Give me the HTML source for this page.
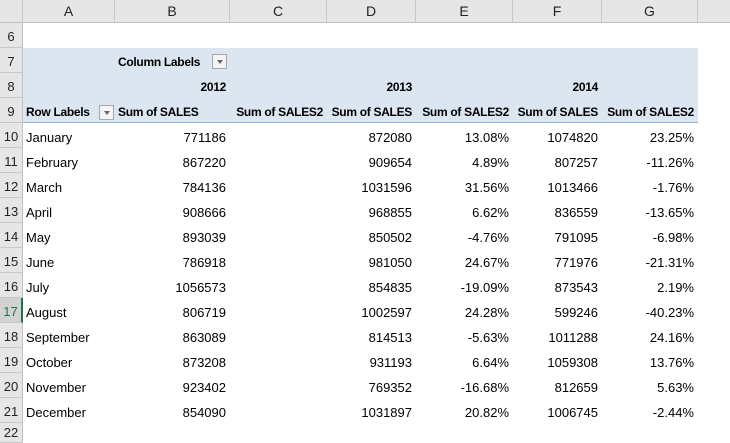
<!DOCTYPE html>
<html><head><meta charset="utf-8"><style>
body{margin:0;width:730px;height:443px;overflow:hidden;background:#fff;font-family:"Liberation Sans",sans-serif;font-size:13px;color:#000;position:relative}
div{position:absolute;box-sizing:border-box}
.ch{top:0;height:23px;background:#e6e6e6;border-right:1px solid #c8c8c8;border-bottom:1px solid #c0c0c0;text-align:center;line-height:23px;color:#222;font-size:14px}
.rh{left:0;width:23px;height:25px;background:#e6e6e6;border-bottom:1px solid #c8c8c8;border-right:1px solid #c0c0c0;text-align:center;line-height:27px;color:#222}
.c{height:25px;line-height:29px;white-space:nowrap;overflow:visible}
.r{text-align:right;padding-right:4px}
.l{padding-left:3px}
.b{font-weight:bold;font-size:12px;letter-spacing:-0.3px}
.dd{width:15px;height:15px;border:1px solid #a8a8a8;background:#f4f4f4}
.dd:after{content:"";position:absolute;left:4px;top:5px;border-left:3px solid transparent;border-right:3px solid transparent;border-top:4px solid #666}
</style></head><body>
<div class="ch" style="left:0;width:23px;background:#e6e6e6"></div>
<div class="ch" style="left:23px;width:92px">A</div>
<div class="ch" style="left:115px;width:115px">B</div>
<div class="ch" style="left:230px;width:97px">C</div>
<div class="ch" style="left:327px;width:89px">D</div>
<div class="ch" style="left:416px;width:97px">E</div>
<div class="ch" style="left:513px;width:89px">F</div>
<div class="ch" style="left:602px;width:96px">G</div>
<div class="ch" style="left:698px;width:32px;border-right:none"></div>

<div style="left:23px;top:48px;width:675px;height:75px;background:#dce6f1;border-bottom:1px solid #95b3d7"></div>

<div class="rh" style="top:23px">6</div>
<div class="rh" style="top:48px">7</div>
<div class="rh" style="top:73px">8</div>
<div class="rh" style="top:98px">9</div>
<div class="rh" style="top:123px">10</div>
<div class="rh" style="top:148px">11</div>
<div class="rh" style="top:173px">12</div>
<div class="rh" style="top:198px">13</div>
<div class="rh" style="top:223px">14</div>
<div class="rh" style="top:248px">15</div>
<div class="rh" style="top:273px">16</div>
<div class="rh" style="top:298px;background:#d2d2d2;color:#217346;border-right:2px solid #217346">17</div>
<div class="rh" style="top:323px">18</div>
<div class="rh" style="top:348px">19</div>
<div class="rh" style="top:373px">20</div>
<div class="rh" style="top:398px">21</div>
<div class="rh" style="top:423px;height:20px;line-height:20px">22</div>

<div class="c b" style="left:118px;top:48px">Column Labels</div>
<div class="dd" style="left:212px;top:54px"></div>
<div class="c b r" style="left:115px;top:73px;width:115px">2012</div>
<div class="c b r" style="left:327px;top:73px;width:89px">2013</div>
<div class="c b r" style="left:513px;top:73px;width:89px">2014</div>
<div class="c b l" style="left:23px;top:98px">Row Labels</div>
<div class="dd" style="left:99px;top:105px"></div>
<div class="c b l" style="left:115px;top:98px">Sum of SALES</div>
<div class="c b r" style="left:230px;top:98px;width:97px">Sum of SALES2</div>
<div class="c b r" style="left:327px;top:98px;width:89px">Sum of SALES</div>
<div class="c b r" style="left:416px;top:98px;width:97px">Sum of SALES2</div>
<div class="c b r" style="left:513px;top:98px;width:89px">Sum of SALES</div>
<div class="c b r" style="left:602px;top:98px;width:96px">Sum of SALES2</div>

<div class="c l" style="left:23px;top:123px">January</div><div class="c r" style="left:115px;top:123px;width:115px">771186</div><div class="c r" style="left:327px;top:123px;width:89px">872080</div><div class="c r" style="left:416px;top:123px;width:97px">13.08%</div><div class="c r" style="left:513px;top:123px;width:89px">1074820</div><div class="c r" style="left:602px;top:123px;width:96px">23.25%</div>
<div class="c l" style="left:23px;top:148px">February</div><div class="c r" style="left:115px;top:148px;width:115px">867220</div><div class="c r" style="left:327px;top:148px;width:89px">909654</div><div class="c r" style="left:416px;top:148px;width:97px">4.89%</div><div class="c r" style="left:513px;top:148px;width:89px">807257</div><div class="c r" style="left:602px;top:148px;width:96px">-11.26%</div>
<div class="c l" style="left:23px;top:173px">March</div><div class="c r" style="left:115px;top:173px;width:115px">784136</div><div class="c r" style="left:327px;top:173px;width:89px">1031596</div><div class="c r" style="left:416px;top:173px;width:97px">31.56%</div><div class="c r" style="left:513px;top:173px;width:89px">1013466</div><div class="c r" style="left:602px;top:173px;width:96px">-1.76%</div>
<div class="c l" style="left:23px;top:198px">April</div><div class="c r" style="left:115px;top:198px;width:115px">908666</div><div class="c r" style="left:327px;top:198px;width:89px">968855</div><div class="c r" style="left:416px;top:198px;width:97px">6.62%</div><div class="c r" style="left:513px;top:198px;width:89px">836559</div><div class="c r" style="left:602px;top:198px;width:96px">-13.65%</div>
<div class="c l" style="left:23px;top:223px">May</div><div class="c r" style="left:115px;top:223px;width:115px">893039</div><div class="c r" style="left:327px;top:223px;width:89px">850502</div><div class="c r" style="left:416px;top:223px;width:97px">-4.76%</div><div class="c r" style="left:513px;top:223px;width:89px">791095</div><div class="c r" style="left:602px;top:223px;width:96px">-6.98%</div>
<div class="c l" style="left:23px;top:248px">June</div><div class="c r" style="left:115px;top:248px;width:115px">786918</div><div class="c r" style="left:327px;top:248px;width:89px">981050</div><div class="c r" style="left:416px;top:248px;width:97px">24.67%</div><div class="c r" style="left:513px;top:248px;width:89px">771976</div><div class="c r" style="left:602px;top:248px;width:96px">-21.31%</div>
<div class="c l" style="left:23px;top:273px">July</div><div class="c r" style="left:115px;top:273px;width:115px">1056573</div><div class="c r" style="left:327px;top:273px;width:89px">854835</div><div class="c r" style="left:416px;top:273px;width:97px">-19.09%</div><div class="c r" style="left:513px;top:273px;width:89px">873543</div><div class="c r" style="left:602px;top:273px;width:96px">2.19%</div>
<div class="c l" style="left:23px;top:298px">August</div><div class="c r" style="left:115px;top:298px;width:115px">806719</div><div class="c r" style="left:327px;top:298px;width:89px">1002597</div><div class="c r" style="left:416px;top:298px;width:97px">24.28%</div><div class="c r" style="left:513px;top:298px;width:89px">599246</div><div class="c r" style="left:602px;top:298px;width:96px">-40.23%</div>
<div class="c l" style="left:23px;top:323px">September</div><div class="c r" style="left:115px;top:323px;width:115px">863089</div><div class="c r" style="left:327px;top:323px;width:89px">814513</div><div class="c r" style="left:416px;top:323px;width:97px">-5.63%</div><div class="c r" style="left:513px;top:323px;width:89px">1011288</div><div class="c r" style="left:602px;top:323px;width:96px">24.16%</div>
<div class="c l" style="left:23px;top:348px">October</div><div class="c r" style="left:115px;top:348px;width:115px">873208</div><div class="c r" style="left:327px;top:348px;width:89px">931193</div><div class="c r" style="left:416px;top:348px;width:97px">6.64%</div><div class="c r" style="left:513px;top:348px;width:89px">1059308</div><div class="c r" style="left:602px;top:348px;width:96px">13.76%</div>
<div class="c l" style="left:23px;top:373px">November</div><div class="c r" style="left:115px;top:373px;width:115px">923402</div><div class="c r" style="left:327px;top:373px;width:89px">769352</div><div class="c r" style="left:416px;top:373px;width:97px">-16.68%</div><div class="c r" style="left:513px;top:373px;width:89px">812659</div><div class="c r" style="left:602px;top:373px;width:96px">5.63%</div>
<div class="c l" style="left:23px;top:398px">December</div><div class="c r" style="left:115px;top:398px;width:115px">854090</div><div class="c r" style="left:327px;top:398px;width:89px">1031897</div><div class="c r" style="left:416px;top:398px;width:97px">20.82%</div><div class="c r" style="left:513px;top:398px;width:89px">1006745</div><div class="c r" style="left:602px;top:398px;width:96px">-2.44%</div>
</body></html>
